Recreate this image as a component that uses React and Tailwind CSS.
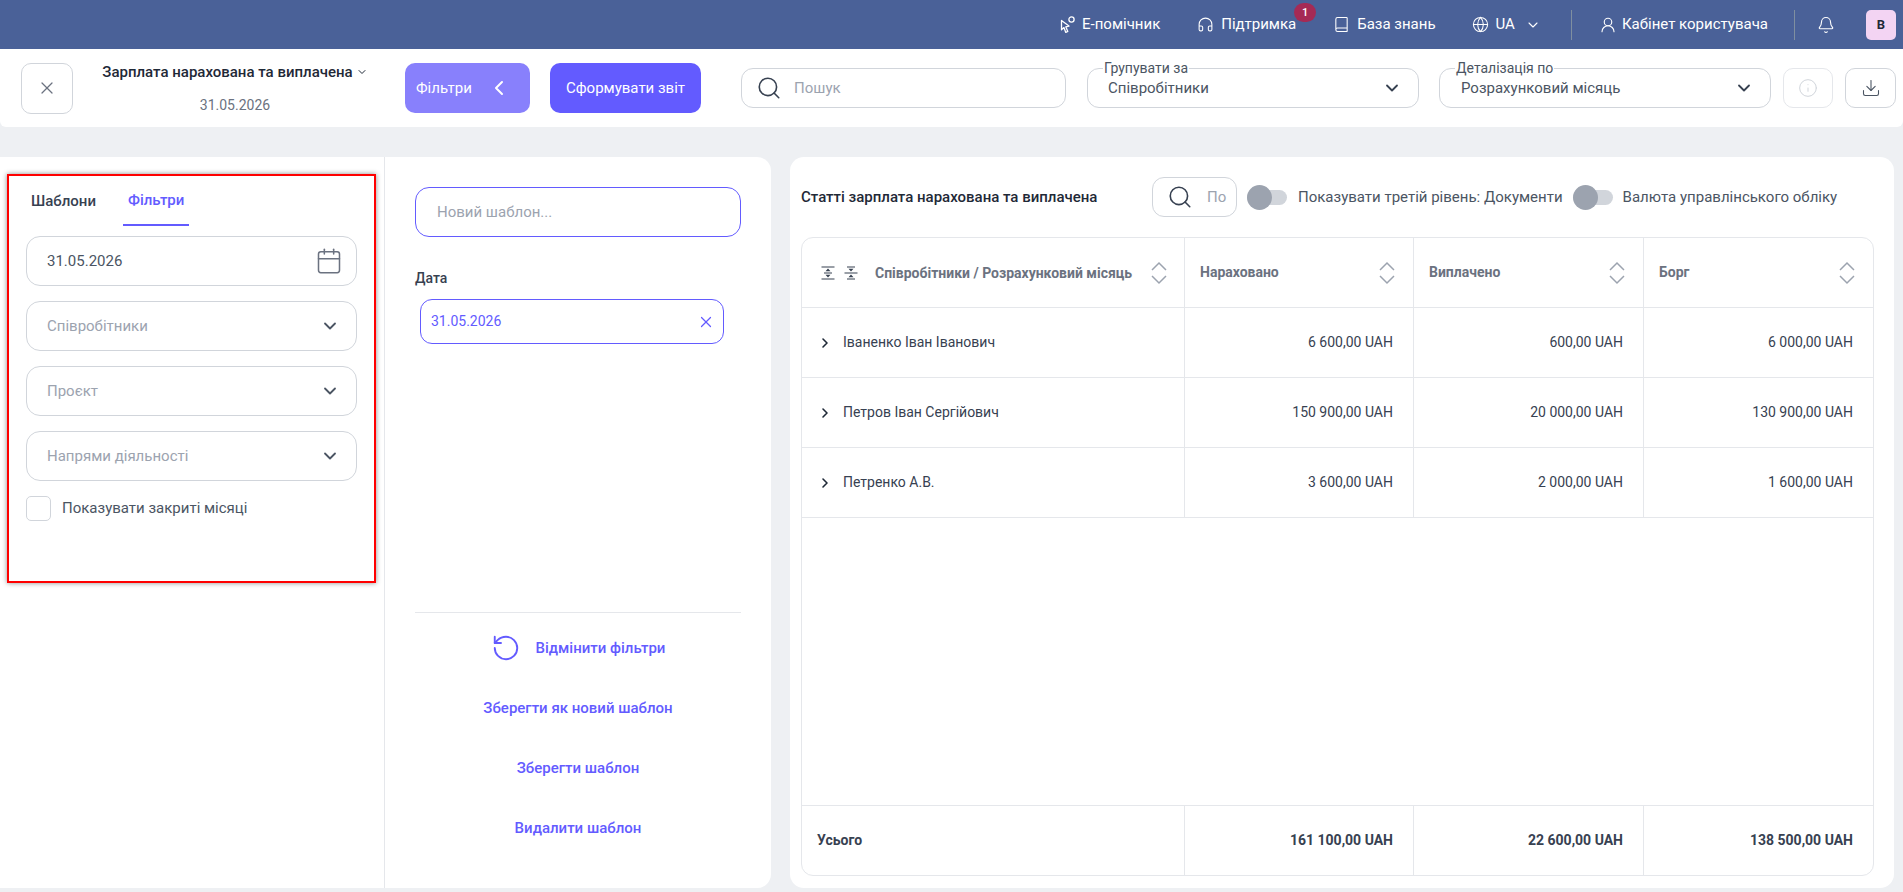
import React from 'react';
import { Bell, BookOpen, Book, Calendar, ChevronDown, ChevronLeft, ChevronRight, Download, Globe, Headphones, Info, RotateCcw, Search, UserRound, X } from 'lucide-react';

const rows = [
  { name: 'Іваненко Іван Іванович', a: '6 600,00 UAH', b: '600,00 UAH', c: '6 000,00 UAH' },
  { name: 'Петров Іван Сергійович', a: '150 900,00 UAH', b: '20 000,00 UAH', c: '130 900,00 UAH' },
  { name: 'Петренко А.В.', a: '3 600,00 UAH', b: '2 000,00 UAH', c: '1 600,00 UAH' },
];

function CursorIcon() {
  return (
    <svg width="16" height="18" viewBox="0 0 16 18" fill="none" stroke="currentColor" strokeWidth="1.3">
      <path d="M1.5 4.5 L9 10 L5.8 10.8 L7.8 15.5 L5.8 16.4 L3.9 11.6 L1.5 13.8 Z" strokeLinejoin="round" />
      <circle cx="11.5" cy="3.5" r="2.6" />
    </svg>
  );
}

function SortIcon() {
  return (
    <svg width="16" height="24" viewBox="0 0 16 24" fill="none" stroke="#9ca3af" strokeWidth="1.5" className="shrink-0">
      <path d="M1 9 L8 2 L15 9" />
      <path d="M1 15 L8 22 L15 15" />
    </svg>
  );
}

function UnfoldIcon() {
  return (
    <svg width="14" height="14" viewBox="0 0 14 14" fill="none" stroke="#374151" strokeWidth="1.2">
      <path d="M0.5 1 H13.5 M0.5 13 H13.5 M3 7 H11" />
      <path d="M7 2.5 L9.5 5.2 H4.5 Z M7 11.5 L9.5 8.8 H4.5 Z" fill="#374151" stroke="none" />
    </svg>
  );
}

function FoldIcon() {
  return (
    <svg width="14" height="14" viewBox="0 0 14 14" fill="none" stroke="#374151" strokeWidth="1.2">
      <path d="M0.5 7 H13.5 M3 1 H11 M3 13 H11" />
      <path d="M7 5.6 L9.5 2.8 H4.5 Z M7 8.4 L9.5 11.2 H4.5 Z" fill="#374151" stroke="none" />
    </svg>
  );
}

function Toggle() {
  return (
    <div className="relative w-[40px] h-[25px] shrink-0 flex items-center">
      <div className="w-full h-[15px] rounded-full bg-[#d1d5db]" />
      <div className="absolute left-0 top-0 w-[25px] h-[25px] rounded-full bg-[#9ca3af]" />
    </div>
  );
}

function FilterSelect({ label }) {
  return (
    <div className="h-[50px] flex items-center justify-between pl-[20px] pr-[16px] border border-[#d1d5db] rounded-[14px]">
      <span className="text-[15px] text-[#9ca3af]">{label}</span>
      <ChevronDown size={20} strokeWidth={2.2} className="text-[#4b5563]" />
    </div>
  );
}

function OutlineSelect({ label, value, valueClass }) {
  return (
    <div className="relative w-[332px] h-[40px] border border-[#d1d5db] rounded-[12px] flex items-center justify-between pr-[16px]">
      <span className="absolute left-[15px] -top-[9px] bg-white px-[1px] text-[14px] leading-[16px] text-[#4b5563]">{label}</span>
      <span className={`text-[15px] text-[#4b5563] ${valueClass}`}>{value}</span>
      <ChevronDown size={20} strokeWidth={2.2} className="text-[#374151]" />
    </div>
  );
}

export default function App() {
  return (
    <div className="h-[892px] flex flex-col bg-[#eef0f3] overflow-hidden font-['Roboto',sans-serif] text-[#374151]">
      {/* top nav */}
      <div className="h-[49px] shrink-0 bg-[#4a6198] text-white flex items-center justify-end pr-[7px] text-[15px]">
        <div className="flex items-center gap-[6px]"><CursorIcon /><span>Е-помічник</span></div>
        <div className="relative flex items-center gap-[7px] ml-[37px]">
          <Headphones size={17} strokeWidth={1.5} />
          <span>Підтримка</span>
          <span className="absolute -right-[20px] -top-[10px] w-[22px] h-[19px] rounded-full bg-[#a52a55] text-[11px] font-medium flex items-center justify-center">1</span>
        </div>
        <div className="flex items-center gap-[7px] ml-[37px]"><Book size={17} strokeWidth={1.5} /><span>База знань</span></div>
        <div className="flex items-center gap-[7px] ml-[36px]">
          <Globe size={17} strokeWidth={1.5} />
          <span>UA</span>
          <ChevronDown size={16} strokeWidth={1.6} className="ml-[3px]" />
        </div>
        <div className="w-px h-[30px] bg-[#7f8fa0] ml-[30px]" />
        <div className="flex items-center gap-[5px] ml-[27px]"><UserRound size={18} strokeWidth={1.5} /><span>Кабінет користувача</span></div>
        <div className="w-px h-[30px] bg-[#7f8fa0] ml-[26px]" />
        <Bell size={18} strokeWidth={1.5} className="ml-[22px]" />
        <div className="w-[30px] h-[30px] rounded-[5px] bg-[#f3d4f3] text-[#1f2937] text-[13px] font-bold flex items-center justify-center ml-[31px]">B</div>
      </div>

      {/* toolbar */}
      <div className="h-[78px] shrink-0 bg-white flex items-center pl-[21px] rounded-b-[6px]">
        <button className="w-[52px] h-[51px] border border-[#d1d5db] rounded-[10px] flex items-center justify-center text-[#6b7280]">
          <X size={20} strokeWidth={1.5} />
        </button>
        <div className="w-[284px] ml-[20px] flex flex-col items-center gap-[14px]">
          <div className="flex items-center gap-[3px] text-[15px] font-medium text-[#1f2937] leading-[20px]">
            <span>Зарплата нарахована та виплачена</span>
            <ChevronDown size={12} strokeWidth={2} />
          </div>
          <span className="text-[14px] leading-[18px] text-[#6b7280]">31.05.2026</span>
        </div>
        <button className="w-[125px] h-[50px] ml-[28px] rounded-[10px] bg-[#8880fc] text-white text-[15px] flex items-center pl-[11px]">
          <span>Фільтри</span>
          <ChevronLeft size={24} strokeWidth={2} className="ml-[15px]" />
        </button>
        <button className="w-[151px] h-[50px] ml-[20px] rounded-[10px] bg-[#635bff] text-white text-[15px]">Сформувати звіт</button>
        <div className="w-[325px] h-[40px] ml-[40px] border border-[#d1d5db] rounded-[12px] flex items-center pl-[14px] gap-[12px]">
          <Search size={26} strokeWidth={1.5} className="text-[#374151]" />
          <span className="text-[15px] text-[#9ca3af]">Пошук</span>
        </div>
        <div className="ml-[21px]"><OutlineSelect label="Групувати за" value="Співробітники" valueClass="pl-[20px]" /></div>
        <div className="ml-[20px]"><OutlineSelect label="Деталізація по" value="Розрахунковий місяць" valueClass="pl-[21px]" /></div>
        <button className="w-[50px] h-[40px] ml-[12px] border border-[#e5e7eb] rounded-[10px] flex items-center justify-center text-[#d1d5db]">
          <Info size={20} strokeWidth={1.2} />
        </button>
        <button className="w-[51px] h-[40px] ml-[12px] border border-[#d1d5db] rounded-[10px] flex items-center justify-center text-[#4b5563]">
          <Download size={20} strokeWidth={1.3} />
        </button>
      </div>

      {/* content */}
      <div className="flex-1 flex pt-[30px] pr-[9px] pb-[4px] gap-[19px] min-h-0">
        {/* filter panel */}
        <div className="w-[771px] shrink-0 bg-white rounded-r-[14px] flex">
          <div className="w-[385px] shrink-0 border-r border-[#e5e7eb] pt-[17px] pl-[7px]">
            <div className="w-[369px] h-[409px] border-2 border-[#ff0000] shadow-[0_0_5px_rgba(0,0,0,0.45)] px-[17px]">
              <div className="flex gap-[22px] mb-[10px] text-[15px] font-medium">
                <div className="h-[50px] px-[5px] flex items-center text-[#374151]">Шаблони</div>
                <div className="h-[50px] px-[5px] flex items-center text-[#635bff] border-b-2 border-[#635bff]">Фільтри</div>
              </div>
              <div className="flex flex-col gap-[15px]">
                <div className="h-[50px] flex items-center justify-between pl-[20px] pr-[13px] border border-[#d1d5db] rounded-[14px]">
                  <span className="text-[15px] text-[#4b5563]">31.05.2026</span>
                  <Calendar size={28} strokeWidth={1.3} className="text-[#6b7280]" />
                </div>
                <FilterSelect label="Співробітники" />
                <FilterSelect label="Проєкт" />
                <FilterSelect label="Напрями діяльності" />
              </div>
              <div className="flex items-center gap-[11px] mt-[15px]">
                <div className="w-[25px] h-[25px] border border-[#d1d5db] rounded-[5px]" />
                <span className="text-[15px] text-[#4b5563]">Показувати закриті місяці</span>
              </div>
            </div>
          </div>
          <div className="flex-1 flex flex-col px-[30px] pt-[30px]">
            <div className="h-[50px] border border-[#635bff] rounded-[14px] flex items-center pl-[21px] text-[15px] text-[#9ca3af]">Новий шаблон...</div>
            <div className="mt-[32px] text-[14px] font-medium leading-[18px] text-[#374151]">Дата</div>
            <div className="w-[304px] h-[45px] ml-[5px] mt-[12px] border border-[#635bff] rounded-[12px] flex items-center justify-between pl-[10px] pr-[8px] text-[14px] text-[#635bff]">
              <span>31.05.2026</span>
              <X size={18} strokeWidth={1.6} />
            </div>
            <div className="mt-[268px] border-t border-[#e5e7eb] flex flex-col items-center text-[15px] font-medium text-[#635bff]">
              <div className="h-[60px] mt-[5px] flex items-center gap-[15px]">
                <RotateCcw size={30} strokeWidth={1.5} />
                <span>Відмінити фільтри</span>
              </div>
              <div className="h-[60px] flex items-center">Зберегти як новий шаблон</div>
              <div className="h-[60px] flex items-center">Зберегти шаблон</div>
              <div className="h-[60px] flex items-center">Видалити шаблон</div>
            </div>
          </div>
        </div>

        {/* report */}
        <div className="flex-1 min-w-0 bg-white rounded-[14px] flex flex-col pl-[11px] pr-[20px] pb-[12px]">
          <div className="h-[80px] shrink-0 flex items-center whitespace-nowrap">
            <span className="text-[15px] font-medium text-[#1f2937] w-[351px] shrink-0">Статті зарплата нарахована та виплачена</span>
            <div className="w-[85px] h-[40px] shrink-0 border border-[#d1d5db] rounded-[12px] flex items-center pl-[14px] gap-[14px] overflow-hidden">
              <Search size={26} strokeWidth={1.5} className="shrink-0 text-[#374151]" />
              <span className="text-[15px] text-[#9ca3af]">По</span>
            </div>
            <div className="ml-[10px]"><Toggle /></div>
            <span className="ml-[11px] text-[15px] text-[#4b5563]">Показувати третій рівень: Документи</span>
            <div className="ml-[10px]"><Toggle /></div>
            <span className="ml-[10px] text-[15px] text-[#4b5563]">Валюта управлінського обліку</span>
          </div>
          <div className="flex-1 min-h-0 flex flex-col border border-[#e5e7eb] rounded-[12px] text-[14px]">
            <div className="h-[70px] shrink-0 grid grid-cols-[383px_229px_230px_1fr] border-b border-[#e5e7eb] font-bold text-[#6b7280]">
              <div className="flex items-center pl-[19px] pr-[17px] border-r border-[#e5e7eb]">
                <div className="flex gap-[9px] shrink-0"><UnfoldIcon /><FoldIcon /></div>
                <span className="ml-[17px] flex-1 leading-[24px]">Співробітники / Розрахунковий місяць</span>
                <SortIcon />
              </div>
              <div className="flex items-center justify-between pl-[15px] pr-[18px] border-r border-[#e5e7eb]"><span>Нараховано</span><SortIcon /></div>
              <div className="flex items-center justify-between pl-[15px] pr-[18px] border-r border-[#e5e7eb]"><span>Виплачено</span><SortIcon /></div>
              <div className="flex items-center justify-between pl-[15px] pr-[18px]"><span>Борг</span><SortIcon /></div>
            </div>
            {rows.map(r => (
              <div key={r.name} className="h-[70px] shrink-0 grid grid-cols-[383px_229px_230px_1fr] border-b border-[#e5e7eb] text-[#374151]">
                <div className="flex items-center pl-[15px] gap-[10px] border-r border-[#e5e7eb]">
                  <ChevronRight size={16} strokeWidth={2.4} className="text-[#1f2937]" />
                  <span>{r.name}</span>
                </div>
                <div className="flex items-center justify-end pr-[20px] border-r border-[#e5e7eb]">{r.a}</div>
                <div className="flex items-center justify-end pr-[20px] border-r border-[#e5e7eb]">{r.b}</div>
                <div className="flex items-center justify-end pr-[20px]">{r.c}</div>
              </div>
            ))}
            <div className="flex-1" />
            <div className="h-[70px] shrink-0 grid grid-cols-[383px_229px_230px_1fr] border-t border-[#e5e7eb] font-bold text-[#374151]">
              <div className="flex items-center pl-[15px] border-r border-[#e5e7eb]">Усього</div>
              <div className="flex items-center justify-end pr-[20px] border-r border-[#e5e7eb]">161 100,00 UAH</div>
              <div className="flex items-center justify-end pr-[20px] border-r border-[#e5e7eb]">22 600,00 UAH</div>
              <div className="flex items-center justify-end pr-[20px]">138 500,00 UAH</div>
            </div>
          </div>
        </div>
      </div>
    </div>
  );
}
